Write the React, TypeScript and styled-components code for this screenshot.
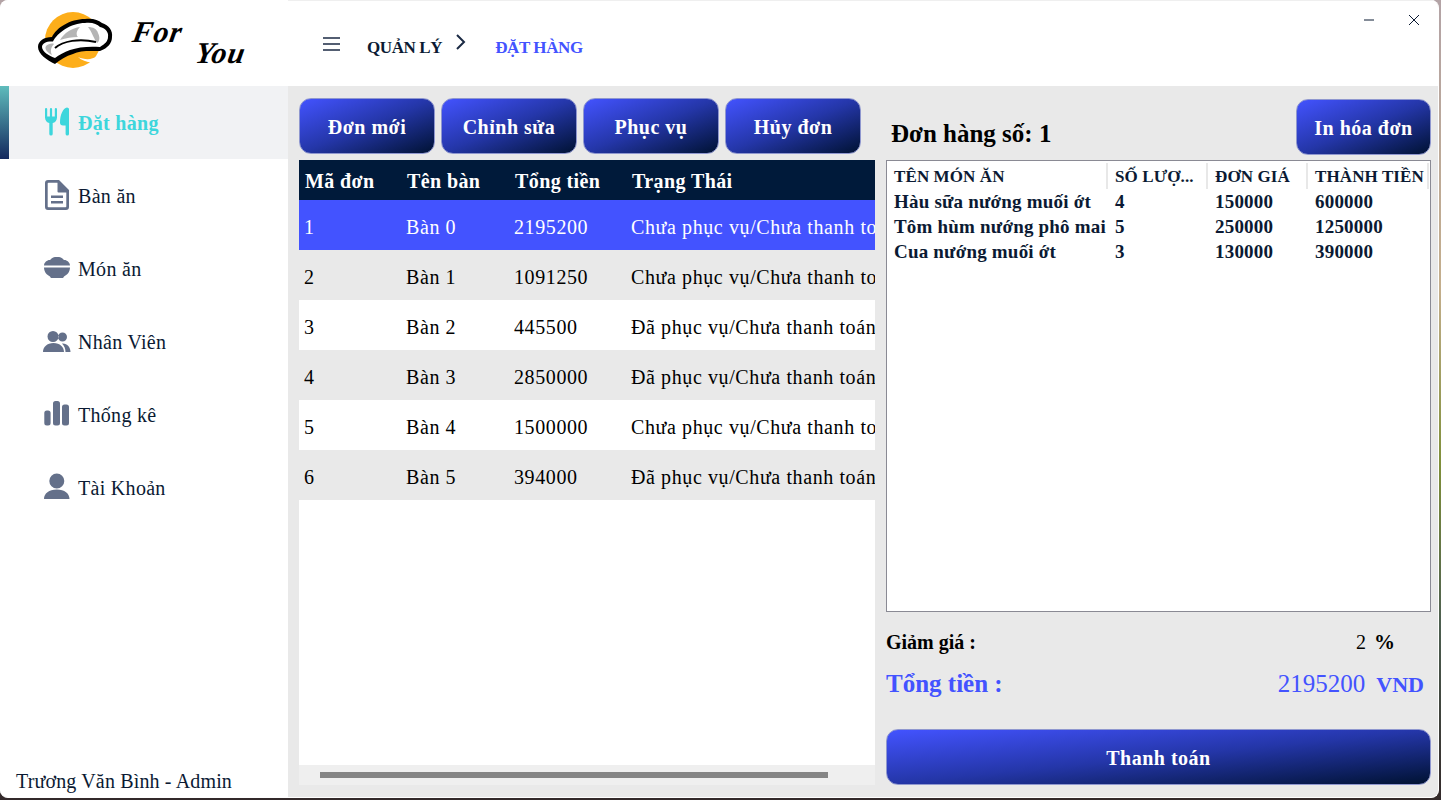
import React from "react";
import styled, { createGlobalStyle } from "styled-components";

const GlobalStyle = createGlobalStyle`
html, body {
    margin: 0;
    padding: 0;
    height: 800px;
    overflow: hidden;
    background: linear-gradient(180deg, #b3a3a6 0%, #c4ae8c 36%, #7f8f3a 58%, #4d5f50 78%, #33292a 100%);
}
* { box-sizing: border-box; }
`;

const SERIF = `"Liberation Serif", "DejaVu Serif", serif`;
const NAVY = "#001a3a";
const BLUE = "#4353ff";
const GRADIENT = "linear-gradient(to bottom right, #4353ff 0%, #2436a8 50%, #001233 100%)";

const Window = styled.div`
background: #e9e9e9;
border-bottom: 1px solid #fff;
border-radius: 8px;
border-right: 1px solid #fff;
color: #000;
display: flex;
font-family: ${SERIF};
height: 798px;
overflow: hidden;
width: 1439px;
`;

const Sidebar = styled.aside`
background: #fff;
display: flex;
flex-direction: column;
flex-shrink: 0;
width: 288px;
`;

const LogoBar = styled.div`
align-items: flex-start;
display: flex;
height: 86px;
padding: 10px 0 0 36px;
`;

const LogoMark = styled.svg`
flex-shrink: 0;
height: 60px;
width: 80px;
`;

const LogoWord = styled.span<{ $top: number; $left: number }>`
color: #000;
font-family: ${SERIF};
font-size: 30px;
font-style: italic;
font-weight: 700;
letter-spacing: 1px;
line-height: 30px;
margin: ${(p) => p.$top}px 0 0 ${(p) => p.$left}px;
transform: skewX(-10deg);
`;

const Menu = styled.nav`
display: flex;
flex-direction: column;
`;

const MenuItem = styled.div<{ $active?: boolean }>`
align-items: center;
background: ${(p) => (p.$active ? "#f1f2f4" : "#fff")};
color: ${(p) => (p.$active ? "#3dd6dc" : "#0b1a33")};
display: flex;
font-size: 20px;
font-weight: ${(p) => (p.$active ? 700 : 400)};
gap: 7px;
height: 73px;
letter-spacing: 0.3px;
padding-left: ${(p) => (p.$active ? "0" : "43px")};
`;

const ActiveBar = styled.span`
align-self: stretch;
background: linear-gradient(180deg, #5fbcbc 0%, #14295e 100%);
margin-right: 27px;
width: 9px;
`;

const MenuIcon = styled.svg<{ $active?: boolean }>`
fill: ${(p) => (p.$active ? "#3dd6dc" : "#64708a")};
flex-shrink: 0;
height: 32px;
width: 28px;
`;

const MenuLabel = styled.span`
padding-top: 2px;
`;

const UserName = styled.div`
color: #0b1a33;
font-size: 20px;
letter-spacing: 0.15px;
line-height: 24px;
margin-top: auto;
padding: 0 0 4px 16px;
`;

const Main = styled.main`
display: flex;
flex: 1;
flex-direction: column;
min-width: 0;
`;

const TopBar = styled.header`
align-items: center;
background: #fff;
border-top: 1px solid #efefef;
display: flex;
height: 86px;
padding-left: 34px;
`;

const MenuLines = styled.svg`
height: 16px;
margin-right: 26px;
width: 19px;
`;

const Crumb = styled.span<{ $current?: boolean }>`
color: ${(p) => (p.$current ? BLUE : "#0b1a33")};
font-size: 17px;
font-weight: 700;
letter-spacing: -0.4px;
margin-top: 9px;
`;

const Chevron = styled.svg`
height: 18px;
margin: -4px 28px 0 13px;
width: 12px;
`;

const WindowControls = styled.div`
align-items: center;
align-self: flex-start;
display: flex;
gap: 33px;
margin-left: auto;
padding: 13px 18px 0 0;
`;

const ControlIcon = styled.svg`
display: block;
height: 12px;
width: 12px;
`;

const Content = styled.div`
display: flex;
flex: 1;
gap: 11px;
min-height: 0;
padding: 12px 7px 12px 11px;
`;

const LeftColumn = styled.section`
display: flex;
flex-direction: column;
flex-shrink: 0;
gap: 6px;
width: 576px;
`;

const RightColumn = styled.section`
display: flex;
flex: 1;
flex-direction: column;
min-width: 0;
`;

const ButtonRow = styled.div`
display: flex;
gap: 6px;
`;

const ActionButton = styled.button<{ $wide?: boolean }>`
background: ${GRADIENT};
border: 1px solid #8f97cf;
border-radius: 12px;
color: #fff;
font-family: ${SERIF};
font-size: 20px;
font-weight: 700;
height: 56px;
letter-spacing: 0.5px;
padding: 2px 0 0;
width: ${(p) => (p.$wide ? "100%" : "136px")};
`;

const OrdersPanel = styled.div`
background: #fff;
display: flex;
flex: 1;
flex-direction: column;
min-height: 0;
overflow: hidden;
`;

const OrderRow = styled.div<{ $kind: "head" | "selected" | "odd" | "even" }>`
align-items: center;
background: ${(p) => ({ head: NAVY, selected: BLUE, odd: "#e9e9e9", even: "#fff" }[p.$kind])};
color: ${(p) => (p.$kind === "head" || p.$kind === "selected" ? "#fff" : "#000")};
display: grid;
flex-shrink: 0;
font-size: 20px;
font-weight: ${(p) => (p.$kind === "head" ? 700 : 400)};
grid-template-columns: 102px 108px 117px 249px;
height: ${(p) => (p.$kind === "head" ? "40px" : "50px")};
letter-spacing: ${(p) => (p.$kind === "head" ? "0.4px" : "0.6px")};
padding-left: ${(p) => (p.$kind === "head" ? "1px" : "0")};
padding-top: ${(p) => (p.$kind === "head" ? "2px" : "4px")};
`;

const OrderCell = styled.div`
overflow: hidden;
padding-left: 5px;
white-space: nowrap;
`;

const ScrollTrack = styled.div`
align-items: center;
background: #efefef;
display: flex;
flex-shrink: 0;
height: 20px;
margin-top: auto;
padding-left: 21px;
`;

const ScrollThumb = styled.div`
background: #858585;
height: 6px;
width: 508px;
`;

const DetailHead = styled.div`
align-items: flex-end;
display: flex;
height: 62px;
justify-content: space-between;
padding: 1px 0 5px 5px;
`;

const DetailTitle = styled.h2`
font-size: 25px;
font-weight: 700;
margin: 0 0 7px;
`;

const PrintButton = styled(ActionButton)`
flex-shrink: 0;
width: 135px;
`;

const ItemsBox = styled.div`
background: #fff;
border: 1px solid #8a8a94;
flex: 1;
min-height: 0;
padding-top: 2px;
`;

const ItemRow = styled.div<{ $head?: boolean }>`
align-items: center;
color: #0b1a33;
display: grid;
font-size: ${(p) => (p.$head ? "17px" : "19px")};
font-weight: 700;
grid-template-columns: 221px 100px 100px 121px;
height: ${(p) => (p.$head ? "26px" : "25px")};
letter-spacing: ${(p) => (p.$head ? "0.1px" : "0.2px")};
margin-bottom: ${(p) => (p.$head ? "1px" : "0")};
`;

const ItemCell = styled.div<{ $head?: boolean }>`
border-right: ${(p) => (p.$head ? "2px solid #e8e8e8" : "none")};
height: 100%;
line-height: ${(p) => (p.$head ? "28px" : "23px")};
overflow: hidden;
padding-left: 7px;
white-space: nowrap;
`;

const SummaryRow = styled.div<{ $total?: boolean }>`
align-items: center;
color: ${(p) => (p.$total ? BLUE : "#000")};
display: flex;
font-size: ${(p) => (p.$total ? "25px" : "20px")};
font-weight: 700;
height: ${(p) => (p.$total ? "42px" : "24px")};
justify-content: space-between;
margin-top: ${(p) => (p.$total ? "9px" : "18px")};
`;

const SummaryValue = styled.div<{ $end: number; $gap: number }>`
align-items: baseline;
display: flex;
gap: ${(p) => p.$gap}px;
padding-right: ${(p) => p.$end}px;
`;

const Amount = styled.span`
font-weight: 400;
`;

const Unit = styled.span<{ $size: number }>`
font-size: ${(p) => p.$size}px;
`;

const PayArea = styled.div`
margin-top: 24px;
`;

const menuItems = [
    { label: "Đặt hàng", icon: "M2 2.100a1.100 1.100 0 0 1 2.200 0V9.500h2.700V2.100a1.100 1.100 0 0 1 2.200 0V9.500h2.700V2.100a1.100 1.100 0 0 1 2.200 0V10.500c0 3-2 5-4.300 5.600V26.900a1.700 1.700 0 0 1-3.400 0V16.100C4 15.500 2 13.500 2 10.500zM24 .5c1 0 2 .7 2 1.800V26.900a1.700 1.700 0 0 1-3.400 0V18.500H20c-2 0-3-1-3-3C17 8 20 1 24 .5z" },
    { label: "Bàn ăn", icon: "M5 0H16L26 10V27a3 3 0 0 1-3 3H5a3 3 0 0 1-3-3V3a3 3 0 0 1 3-3zM5.500 2.700a.8.8 0 0 0-.8.8V26.500a.8.8 0 0 0 .8.8H22.500a.8.8 0 0 0 .8-.8V12.500H15.500a1 1 0 0 1-1-1V2.700zM8 15.500h12v2.600H8zM8 21h12v2.600H8z" },
    { label: "Món ăn", icon: "M1 12.500C1 9 5 6.500 7 7C9 4.500 11 4 14 4C17 4 19 4.500 21 7C23 6.500 27 9 27 12.500zM1 14.500H27C27 19 24 22 21 23.500C20.500 24.500 20 25 19 25H9C8 25 7.500 24.500 7 23.500C4 22 1 19 1 14.500z" },
    { label: "Nhân Viên", icon: "M10 5a5.500 5.500 0 1 1 0 11 5.500 5.500 0 0 1 0-11zM19.500 6.500a4.500 4.500 0 1 1 0 9 4.500 4.500 0 0 1 0-9zM0 26c0-5 4-9 10.500-9s10.500 4 10.500 9zM22.500 26c0-3-1-6-3.500-8.500 5-.5 8.500 3.500 8.500 8.500z" },
    { label: "Thống kê", icon: "M3.800 11.500h1.300a2.500 2.500 0 0 1 2.500 2.500v10a2.500 2.500 0 0 1-2.500 2.500H3.800a2.500 2.500 0 0 1-2.500-2.500V14a2.500 2.500 0 0 1 2.500-2.500zM12.500 2h2a2.500 2.500 0 0 1 2.500 2.500V24a2.500 2.500 0 0 1-2.500 2.500h-2A2.500 2.500 0 0 1 10 24V4.500A2.500 2.500 0 0 1 12.500 2zM21.500 5.500h2A2.500 2.500 0 0 1 26 8v16a2.500 2.500 0 0 1-2.500 2.500h-2A2.500 2.500 0 0 1 19 24V8a2.500 2.500 0 0 1 2.500-2.500z" },
    { label: "Tài Khoản", icon: "M13.800 1.500a7.500 7.500 0 1 1 0 15 7.500 7.500 0 0 1 0-15zM1 27c0-5.500 5-9.500 12.800-9.500S26.500 21.500 26.500 27z" },
];

const orders = [
    ["1", "Bàn 0", "2195200", "Chưa phục vụ/Chưa thanh toán"],
    ["2", "Bàn 1", "1091250", "Chưa phục vụ/Chưa thanh toán"],
    ["3", "Bàn 2", "445500", "Đã phục vụ/Chưa thanh toán"],
    ["4", "Bàn 3", "2850000", "Đã phục vụ/Chưa thanh toán"],
    ["5", "Bàn 4", "1500000", "Chưa phục vụ/Chưa thanh toán"],
    ["6", "Bàn 5", "394000", "Đã phục vụ/Chưa thanh toán"],
];

const orderItems = [
    ["Hàu sữa nướng muối ớt", "4", "150000", "600000"],
    ["Tôm hùm nướng phô mai", "5", "250000", "1250000"],
    ["Cua nướng muối ớt", "3", "130000", "390000"],
];

const HatLogo = () => (
    <LogoMark viewBox="36 10 80 60">
        <circle cx="73" cy="40" r="28" fill="#fdae1a" />
        <path d="M55 64C47 60 38 54 38 47C38 41 44 37 52 37C56 28 70 19 85 19C93 18 98 20 102 23C109 25 113 31 112 37C112 43 108 48 100 51C92 51 80 50 73 54C66 56 60 60 55 64Z" fill="#000" />
        <path d="M55 58C50 56 42 52 42 47C42 43 47 41 53 41.500C57 33 71 23 85 23C92 22 97 24 100 27C105 28 109 32 108 37C108 41 105 44 100 47C90 46 78 47 70 50C64 52 59 55 55 58Z" fill="#fff" />
        <path d="M46 46C48 44 52 43 54 44C51 47 50 51 52 55C48 53 44 49 46 46ZM60 40C64 33 72 28 80 27C76 31 76 35 78 37C72 37 66 38 60 40ZM88 27C93 27 97 29 98 33C100 37 100 41 97 43C94 39 92 32 88 27Z" fill="#b5b5b5" />
        <path d="M55 48C63 41 79 38 96 42" fill="none" stroke="#000" strokeWidth="2" />
        <path d="M78 57C85 60 92 60 97 56C100 55 103 53 105 52C103 56 100 60 95 62C89 63 82 61 78 57Z" fill="#fff" />
    </LogoMark>
);

const App = () => (
    <>
        <GlobalStyle />
        <Window>
            <Sidebar>
                <LogoBar>
                    <HatLogo />
                    <LogoWord $top={7} $left={17}>For</LogoWord>
                    <LogoWord $top={28} $left={13}>You</LogoWord>
                </LogoBar>
                <Menu>
                    {menuItems.map((item, index) => (
                        <MenuItem key={item.label} $active={index === 0}>
                            {index === 0 && <ActiveBar />}
                            <MenuIcon $active={index === 0} viewBox="0 0 28 32">
                                <path d={item.icon} fillRule="evenodd" />
                            </MenuIcon>
                            <MenuLabel>{item.label}</MenuLabel>
                        </MenuItem>
                    ))}
                </Menu>
                <UserName>Trương Văn Bình - Admin</UserName>
            </Sidebar>
            <Main>
                <TopBar>
                    <MenuLines viewBox="0 0 19 16">
                        <path d="M1 2h17M1 8h17M1 14h17" stroke="#1b2a44" strokeWidth="1.500" />
                    </MenuLines>
                    <Crumb>QUẢN LÝ</Crumb>
                    <Chevron viewBox="0 0 12 18">
                        <path d="M2 2l7 7-7 7" fill="none" stroke="#1b2a44" strokeWidth="2" />
                    </Chevron>
                    <Crumb $current>ĐẶT HÀNG</Crumb>
                    <WindowControls>
                        <ControlIcon viewBox="0 0 12 12">
                            <path d="M1 6h10" stroke="#0b1a33" strokeWidth="1" />
                        </ControlIcon>
                        <ControlIcon viewBox="0 0 12 12">
                            <path d="M1 1l10 10M11 1L1 11" stroke="#0b1a33" strokeWidth="1" />
                        </ControlIcon>
                    </WindowControls>
                </TopBar>
                <Content>
                    <LeftColumn>
                        <ButtonRow>
                            <ActionButton>Đơn mới</ActionButton>
                            <ActionButton>Chỉnh sửa</ActionButton>
                            <ActionButton>Phục vụ</ActionButton>
                            <ActionButton>Hủy đơn</ActionButton>
                        </ButtonRow>
                        <OrdersPanel>
                            <OrderRow $kind="head">
                                <OrderCell>Mã đơn</OrderCell>
                                <OrderCell>Tên bàn</OrderCell>
                                <OrderCell>Tổng tiền</OrderCell>
                                <OrderCell>Trạng Thái</OrderCell>
                            </OrderRow>
                            {orders.map((order, index) => (
                                <OrderRow key={order[0]} $kind={index === 0 ? "selected" : index % 2 === 1 ? "odd" : "even"}>
                                    {order.map((value) => <OrderCell key={value}>{value}</OrderCell>)}
                                </OrderRow>
                            ))}
                            <ScrollTrack>
                                <ScrollThumb />
                            </ScrollTrack>
                        </OrdersPanel>
                    </LeftColumn>
                    <RightColumn>
                        <DetailHead>
                            <DetailTitle>Đơn hàng số: 1</DetailTitle>
                            <PrintButton>In hóa đơn</PrintButton>
                        </DetailHead>
                        <ItemsBox>
                            <ItemRow $head>
                                <ItemCell $head>TÊN MÓN ĂN</ItemCell>
                                <ItemCell $head>SỐ LƯỢ...</ItemCell>
                                <ItemCell $head>ĐƠN GIÁ</ItemCell>
                                <ItemCell $head>THÀNH TIỀN</ItemCell>
                            </ItemRow>
                            {orderItems.map((item) => (
                                <ItemRow key={item[0]}>
                                    {item.map((value) => <ItemCell key={value}>{value}</ItemCell>)}
                                </ItemRow>
                            ))}
                        </ItemsBox>
                        <SummaryRow>
                            <span>Giảm giá :</span>
                            <SummaryValue $end={36} $gap={8}>
                                <Amount>2</Amount>
                                <Unit $size={21}>%</Unit>
                            </SummaryValue>
                        </SummaryRow>
                        <SummaryRow $total>
                            <span>Tổng tiền :</span>
                            <SummaryValue $end={7} $gap={11}>
                                <Amount>2195200</Amount>
                                <Unit $size={22}>VND</Unit>
                            </SummaryValue>
                        </SummaryRow>
                        <PayArea>
                            <ActionButton $wide>Thanh toán</ActionButton>
                        </PayArea>
                    </RightColumn>
                </Content>
            </Main>
        </Window>
    </>
);

export default App;
